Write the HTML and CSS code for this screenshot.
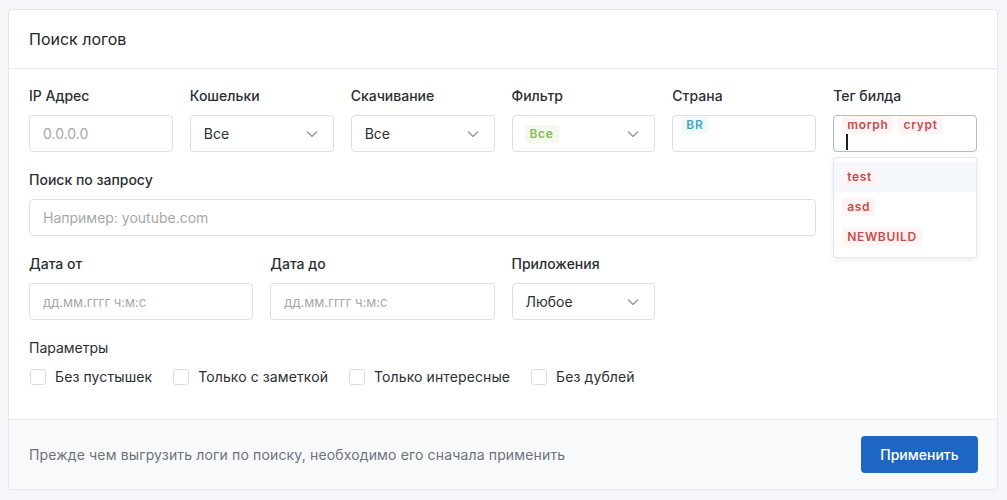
FILE: index.html
```html
<!DOCTYPE html>
<html lang="ru">
<head>
<meta charset="utf-8">
<link rel="stylesheet" href="styles.css">
</head>
<body>
<div class="card">
  <div class="card-header">Поиск логов</div>
  <div class="card-body">
    <div class="grid">
      <div class="field col2">
        <div class="label">IP Адрес</div>
        <div class="input placeholder">0.0.0.0</div>
      </div>
      <div class="field col2">
        <div class="label">Кошельки</div>
        <div class="input select"><span>Все</span><svg class="chev" viewBox="0 0 12 8"><path d="M1 1.5l5 5 5-5" fill="none" stroke="#8a8f95" stroke-width="1.2"/></svg></div>
      </div>
      <div class="field col2">
        <div class="label">Скачивание</div>
        <div class="input select"><span>Все</span><svg class="chev" viewBox="0 0 12 8"><path d="M1 1.5l5 5 5-5" fill="none" stroke="#8a8f95" stroke-width="1.2"/></svg></div>
      </div>
      <div class="field col2">
        <div class="label">Фильтр</div>
        <div class="input select"><span class="badge green">Все</span><svg class="chev" viewBox="0 0 12 8"><path d="M1 1.5l5 5 5-5" fill="none" stroke="#8a8f95" stroke-width="1.2"/></svg></div>
      </div>
      <div class="field col2">
        <div class="label">Страна</div>
        <div class="input tags"><div class="tag-row"><span class="badge teal">BR</span></div></div>
      </div>
      <div class="field col2">
        <div class="label">Тег билда</div>
        <div class="input tags focus">
          <div class="tag-row"><span class="badge red">morph</span><span class="badge red">crypt</span></div>
          <div class="caret"></div>
        </div>
        <div class="menu">
          <div class="menu-item active"><span class="badge red">test</span></div>
          <div class="menu-item"><span class="badge red">asd</span></div>
          <div class="menu-item"><span class="badge red">NEWBUILD</span></div>
        </div>
      </div>

      <div class="field col10">
        <div class="label">Поиск по запросу</div>
        <div class="input placeholder">Например: youtube.com</div>
      </div>

      <div class="field col3 rowstart">
        <div class="label">Дата от</div>
        <div class="input placeholder small">дд.мм.гггг ч:м:с</div>
      </div>
      <div class="field col3">
        <div class="label">Дата до</div>
        <div class="input placeholder small">дд.мм.гггг ч:м:с</div>
      </div>
      <div class="field col2">
        <div class="label">Приложения</div>
        <div class="input select"><span>Любое</span><svg class="chev" viewBox="0 0 12 8"><path d="M1 1.5l5 5 5-5" fill="none" stroke="#8a8f95" stroke-width="1.2"/></svg></div>
      </div>
    </div>

    <div class="params">
      <div class="label">Параметры</div>
      <div class="checks">
        <label class="check"><span class="box"></span>Без пустышек</label>
        <label class="check"><span class="box"></span>Только с заметкой</label>
        <label class="check"><span class="box"></span>Только интересные</label>
        <label class="check"><span class="box"></span>Без дублей</label>
      </div>
    </div>
  </div>
  <div class="card-footer">
    <div class="note">Прежде чем выгрузить логи по поиску, необходимо его сначала применить</div>
    <button class="btn">Применить</button>
  </div>
</div>
</body>
</html>
```

FILE: styles.css
```css
* { box-sizing: border-box; }
html, body { margin: 0; padding: 0; }
body {
  background: #f4f6fa;
  font-family: Inter, "Noto Sans", "Liberation Sans", sans-serif;
  color: #2b2f33;
  padding: 9px 9px 0 8px;
}
.card {
  background: #fff;
  border: 1px solid #e3e6ec;
  border-radius: 4px;
  width: 990px;
  height: 481px;
  display: flex;
  flex-direction: column;
}
.card-header {
  height: 59px;
  padding: 0 20px;
  display: flex;
  align-items: center;
  font-size: 16px;
  font-weight: 400;
  border-bottom: 1px solid #e6e8ec;
  color: #23272b;
}
.card-body {
  padding: 17px 20px 0 20px;
  flex: 1;
}
.grid {
  display: grid;
  grid-template-columns: repeat(12, 1fr);
  column-gap: 17px;
  row-gap: 18px;
}
.field { position: relative; min-width: 0; }
.col2 { grid-column: span 2; }
.col3 { grid-column: span 3; }
.col10 { grid-column: span 10; }
.rowstart { grid-column: 1 / span 3; }
.label {
  font-size: 14px;
  font-weight: 500;
  line-height: 20px;
  margin-bottom: 9px;
  color: #2b2f33;
}
.input {
  height: 37px;
  border: 1px solid #dcdfe4;
  border-radius: 4px;
  padding: 0 13px;
  display: flex;
  align-items: center;
  font-size: 14px;
  color: #2b2f33;
  background: #fff;
}
.placeholder { color: #a4a8ad; }
.placeholder.small { font-size: 13px; }
.select { justify-content: space-between; }
.chev { width: 12px; height: 8px; margin-right: 2px; }
.badge {
  display: inline-block;
  font-size: 12px;
  font-weight: 600;
  letter-spacing: 0.7px;
  line-height: 18px;
  padding: 0 5px;
  border-radius: 3px;
}
.green { color: #86bb4c; background: #f4f9ee; }
.teal { color: #3ea6ba; background: #f1f9fb; }
.red { color: #c84b4d; background: #fdf4f3; }
.select .badge.green { margin-left: -1px; }
.tags {
  flex-direction: column;
  align-items: flex-start;
  justify-content: flex-start;
  padding: 0 8px;
}
.tag-row { display: flex; gap: 5px; }
.focus { border-color: #a9bdd1; }
.caret {
  width: 2px;
  height: 16px;
  background: #1f1f1f;
  margin-left: 4px;
}
.menu {
  position: absolute;
  left: 0;
  right: 0;
  top: 71px;
  background: #fff;
  border: 1px solid #e4e7eb;
  border-radius: 3px;
  box-shadow: 0 2px 6px rgba(0, 0, 0, 0.08);
  padding: 4px 0 5px 0;
  z-index: 5;
}
.menu-item {
  height: 30px;
  display: flex;
  align-items: center;
  padding: 0 8px;
}
.menu-item.active { background: #f4f7fb; }
.params { margin-top: 18px; }
.params .label { font-weight: 400; margin-bottom: 9px; }
.checks { display: flex; gap: 20px; }
.check {
  display: flex;
  align-items: center;
  font-size: 14px;
  color: #2b2f33;
  line-height: 20px;
  letter-spacing: 0.1px;
}
.box {
  width: 16px;
  height: 16px;
  border: 1px solid #d9dce1;
  border-radius: 3px;
  margin: 0 9px 0 1px;
  background: #fff;
}
.card-footer {
  height: 70px;
  border-top: 1px solid #e6e8ec;
  background: #f8f9fb;
  display: flex;
  align-items: center;
  justify-content: space-between;
  padding: 0 19px 0 20px;
  border-radius: 0 0 4px 4px;
}
.note { font-size: 14px; color: #6d737a; letter-spacing: 0.15px; }
.btn {
  width: 117px;
  height: 37px;
  background: #1e66c3;
  color: #fff;
  border: 0;
  border-radius: 4px;
  font-family: inherit;
  font-size: 14px;
  font-weight: 500;
}
```
